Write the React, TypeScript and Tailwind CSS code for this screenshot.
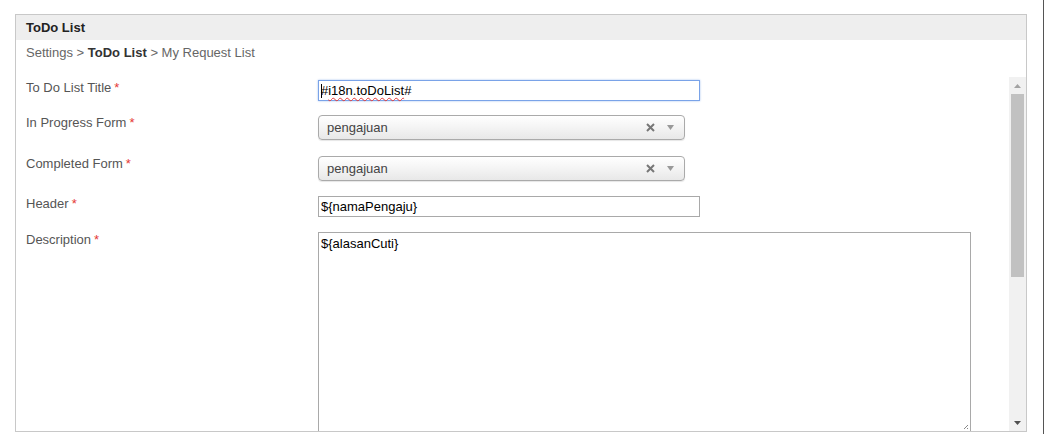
import { useState } from 'react'

function Required() {
  return <span className="text-[#e53935] ml-[3px]">*</span>
}

function Label({ children }: { children: string }) {
  return (
    <div className="w-[292px] shrink-0 text-[13px] leading-[15px] text-[#555]">
      {children}
      <Required />
    </div>
  )
}

function SelectBox({ value }: { value: string }) {
  return (
    <div className="w-[367px] h-[25px] rounded-[4px] border border-[#aaa] bg-gradient-to-b from-white via-[#f4f4f4] to-[#e8e8e8] flex items-center pl-[8px] pr-[10px] text-[13px] text-[#444] shadow-[0_1px_1px_rgba(0,0,0,0.1)]">
      <span className="flex-1">{value}</span>
      <svg className="mr-[12px]" width="9" height="9" viewBox="0 0 9 9">
        <path d="M1 1L8 8M8 1L1 8" stroke="#777" strokeWidth="2" />
      </svg>
      <svg width="7" height="5" viewBox="0 0 7 5">
        <path d="M0 0h7L3.5 5z" fill="#999" />
      </svg>
    </div>
  )
}

export default function App() {
  const [title] = useState('#i18n.toDoList#')

  return (
    <div
      className="w-[1044px] h-[434px] bg-white border-r border-[#555] overflow-hidden pl-[15px] pt-[14px]"
      style={{ fontFamily: '"Liberation Sans", Arial, sans-serif' }}
    >
      <div className="w-[1012px] h-[418px] border border-[#c8c8c8] flex flex-col">
        <div className="h-[25px] bg-[#eeeeee] flex items-center pl-[10px] text-[13px] font-bold text-[#222]">
          ToDo List
        </div>
        <div className="h-[25px] flex items-center pl-[10px] text-[13px] text-[#666]">
          Settings &gt;&nbsp;<span className="font-bold text-[#333]">ToDo List</span>&nbsp;&gt; My Request List
        </div>
        <div className="flex-1 flex min-h-0 pt-[9px]">
          <div className="flex-1 overflow-hidden pl-[10px] pt-[6px]">
            <div className="flex h-[21px]">
              <Label>To Do List Title</Label>
              <div className="relative w-[382px] h-[21px] border border-[#7aa3e8] shadow-[0_0_2px_#a9c4f0] flex items-center pl-[2px] text-[13px] text-black">
                <span className="absolute left-[2px] top-[3px] w-px h-[14px] bg-black" />
                <span>#</span>
                <span className="underline decoration-wavy decoration-[#e53935] decoration-1 underline-offset-[2px]">
                  {title.slice(1, -1)}
                </span>
                <span>#</span>
              </div>
            </div>
            <div className="flex mt-[14px]">
              <Label>In Progress Form</Label>
              <SelectBox value="pengajuan" />
            </div>
            <div className="flex mt-[16px]">
              <Label>Completed Form</Label>
              <SelectBox value="pengajuan" />
            </div>
            <div className="flex mt-[15px]">
              <Label>Header</Label>
              <div className="w-[382px] h-[21px] border border-[#a9a9a9] flex items-center pl-[2px] text-[13px] text-black">
                {'${namaPengaju}'}
              </div>
            </div>
            <div className="flex mt-[15px]">
              <Label>Description</Label>
              <div className="relative w-[653px] h-[200px] border border-[#a9a9a9] pl-[2px] pt-[3px] text-[13px] leading-[15px] text-black">
                {'${alasanCuti}'}
                <svg className="absolute right-[1px] bottom-[1px]" width="6" height="6" viewBox="0 0 6 6">
                  <path d="M5 1L1 5M5 4L4 5" stroke="#888" strokeWidth="1" />
                </svg>
              </div>
            </div>
          </div>
          <div className="w-[17px] mt-[3px] bg-[#f1f1f1] flex flex-col items-center">
            <div className="h-[17px] flex items-center justify-center">
              <svg width="7" height="4" viewBox="0 0 7 4">
                <path d="M3.5 0L7 4H0z" fill="#a3a3a3" />
              </svg>
            </div>
            <div className="w-[13px] h-[183px] bg-[#c1c1c1]" />
            <div className="flex-1" />
            <div className="h-[17px] flex items-center justify-center">
              <svg width="7" height="4" viewBox="0 0 7 4">
                <path d="M0 0h7L3.5 4z" fill="#505050" />
              </svg>
            </div>
          </div>
        </div>
      </div>
    </div>
  )
}
